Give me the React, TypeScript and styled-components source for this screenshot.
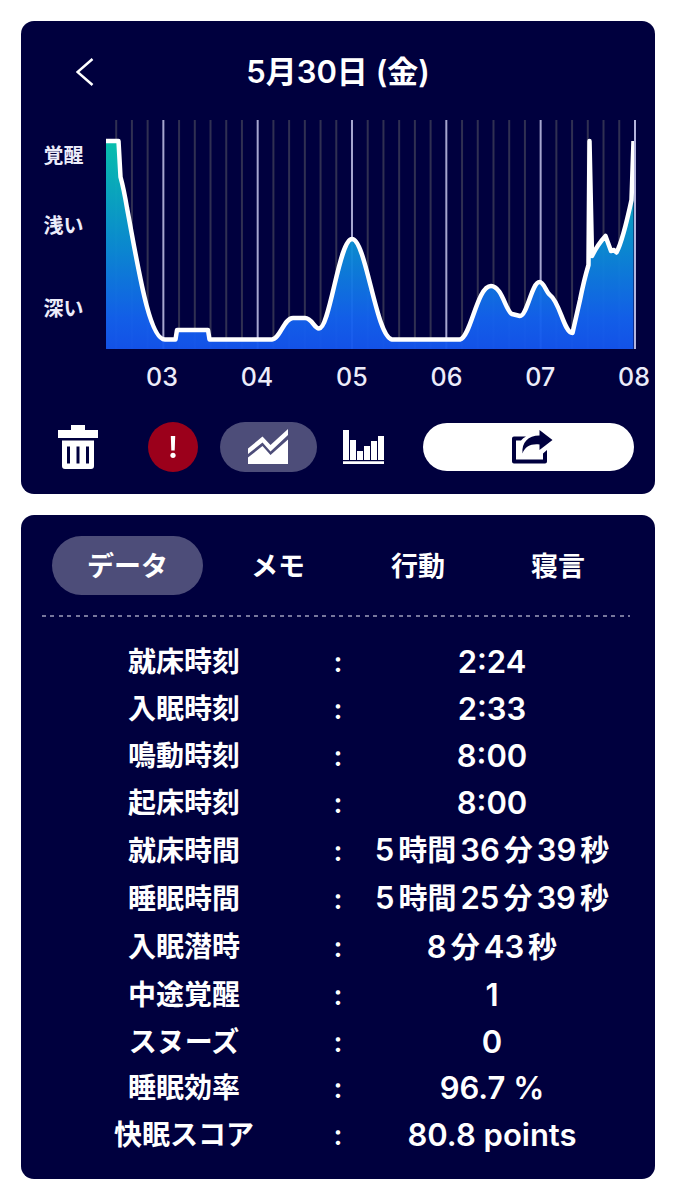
import React, { useState } from "react";
import styled, { createGlobalStyle } from "styled-components";

const navy = "#00003e";
const raised = "#4d4d79";
const soft = "#ececfa";

const GlobalStyle = createGlobalStyle`
  * { box-sizing: border-box; }
  body {
    margin: 0;
    background: #fff;
    color: #fff;
    font-family: Inter, "Noto Sans CJK JP", sans-serif;
    font-weight: 600;
  }
  button {
    font: inherit;
    color: inherit;
    border: 0;
    padding: 0;
    background: none;
    cursor: pointer;
  }
`;

const Page = styled.main`
  display: flex;
  flex-direction: column;
  gap: 21px;
  padding: 21px;
`;

const Card = styled.section`
  background: ${navy};
  border-radius: 13px;
`;

const Header = styled.header`
  display: grid;
  grid-template-columns: 64px 1fr 64px;
  align-items: center;
  padding: 31px 32px 28px;
`;

const BackButton = styled.button`
  display: flex;
  align-items: center;
  justify-content: center;
  height: 40px;
`;

const Title = styled.h1`
  margin: 0;
  font-size: 31px;
  line-height: 40px;
  font-weight: 600;
  text-align: center;
`;

const ChartArea = styled.div`
  display: grid;
  grid-template-columns: 85px 1fr;
  padding-right: 19px;
`;

const Levels = styled.div`
  padding-top: 22px;
  text-align: center;
`;

const Level = styled.div<{ $gap: number }>`
  margin-top: ${(p) => p.$gap}px;
  font-size: 20px;
  line-height: 28px;
  color: ${soft};
`;

const Plot = styled.svg`
  display: block;
  width: 100%;
  height: auto;
`;

const Hours = styled.div`
  display: flex;
  justify-content: space-between;
  margin: 12px 5px 0 125px;
  font-size: 25px;
  line-height: 32px;
  font-weight: 500;
  color: ${soft};
`;

const Toolbar = styled.div`
  display: flex;
  align-items: center;
  padding: 29px 21px 22px 32px;
`;

const ToolButton = styled.button<{ $gap?: number; $wide?: boolean; $fill?: string }>`
  display: flex;
  flex: none;
  align-items: center;
  justify-content: center;
  width: ${(p) => (p.$wide ? 97 : 50)}px;
  height: 50px;
  margin-left: ${(p) => p.$gap ?? 0}px;
  border-radius: 25px;
  background: ${(p) => p.$fill ?? "none"};
`;

const ShareButton = styled.button`
  display: flex;
  flex: 1;
  align-items: center;
  justify-content: center;
  height: 48px;
  margin-left: 34px;
  padding-left: 8px;
  border-radius: 24px;
  background: #fff;
`;

const Tabs = styled.div`
  display: flex;
  padding: 21px 27px 20px 31px;
`;

const Tab = styled.button<{ $active: boolean }>`
  flex: ${(p) => (p.$active ? 151 : 140)} 1 0;
  height: 59px;
  margin-right: ${(p) => (p.$active ? 5 : 0)}px;
  padding-bottom: 2px;
  border-radius: 30px;
  background: ${(p) => (p.$active ? raised : "none")};
  font-size: 27px;
`;

const Divider = styled.hr`
  height: 2px;
  margin: 0 25px 0 21px;
  border: 0;
  background: repeating-linear-gradient(
    90deg,
    #77779c 0 4px,
    transparent 4px 8px,
    #77779c 8px 12px,
    transparent 12px 17px
  );
`;

const TableWrap = styled.div`
  padding: 22px 21px 20px;
`;

const Table = styled.table`
  width: 100%;
  height: 520px;
  border-collapse: collapse;
  table-layout: fixed;
`;

const ColonColumn = styled.col`
  width: 24px;
`;

const Label = styled.th`
  padding: 0;
  font-size: 28px;
  line-height: 40px;
  font-weight: 600;
  text-align: center;
`;

const Colon = styled.td`
  padding: 0;
  font-size: 28px;
  line-height: 40px;
  text-align: center;
`;

const Value = styled.td`
  padding: 0;
  font-size: 31px;
  line-height: 40px;
  text-align: center;
  white-space: nowrap;
`;

const Duration = styled.span`
  display: inline-flex;
  align-items: baseline;
  gap: 4px;
`;

const Unit = styled.span`
  font-size: 29px;
`;

const curve =
  "M0 21H12.5L14.5 57C17 66 19 76 21 88C32 146 43 220 59 219.500H69.500L71 210H102L103.500 219.500H166C174 219 178 198 187 198H199C206 198 208 208.500 213 208.500C224 208.500 233 119 246 119C260 119 270 217 286 219.500H354C365 217 371 166 385 166C396 166 400 192 406 194L414 196C421 196 426 162 433.500 162C438 162 440 172 444 175C454 182 458 213 466.500 213L474 180Q478 160 482.500 145L483.500 21L486 136Q492 124 499.500 116L505 131L508 130L510.500 132.500C515 124 521 101 525.500 80L527.500 21";

const gridLines = Array.from({ length: 33 }, (_, i) => ({
  x: 10.2 + i * 15.72,
  hour: i % 6 === 3,
}));

function SleepChart() {
  return (
    <Plot viewBox="0 0 530 229" role="img" aria-label="睡眠グラフ">
      <defs>
        <linearGradient id="depth" x1="0" y1="21" x2="0" y2="229" gradientUnits="userSpaceOnUse">
          <stop offset="0" stopColor="#08c6b0" />
          <stop offset="0.5" stopColor="#0b8ed4" />
          <stop offset="0.85" stopColor="#1362ee" />
          <stop offset="1" stopColor="#1455ee" />
        </linearGradient>
        <clipPath id="plotClip">
          <rect width="528" height="229" />
        </clipPath>
      </defs>
      {gridLines.map((l) => (
        <line
          key={l.x}
          x1={l.x}
          x2={l.x}
          y1="0"
          y2="229"
          stroke={l.hour ? "#a6a6cf" : "#303052"}
          strokeWidth="2"
        />
      ))}
      <g clipPath="url(#plotClip)">
        <path d={`${curve}V229H0Z`} fill="url(#depth)" fillOpacity="0.96" />
        <path d={curve} fill="none" stroke="#fff" strokeWidth="4.5" strokeLinejoin="round" />
      </g>
      <line x1="529" x2="529" y1="0" y2="229" stroke="#b4b4dc" strokeWidth="2" />
    </Plot>
  );
}

const BackIcon = () => (
  <svg width="18" height="28" viewBox="0 0 18 28" aria-hidden="true">
    <path d="M16.500 1L1.500 14L16.500 27" fill="none" stroke="#fff" strokeWidth="2.500" />
  </svg>
);

const TrashIcon = () => (
  <svg width="40" height="44" viewBox="0 0 40 44" aria-hidden="true">
    <path
      fill="#fff"
      fillRule="evenodd"
      d="M13 0H27V5H40V13H0V5H13ZM4 15.500H36V41Q36 44 33 44H7Q4 44 4 41ZM9 21.500V38.500H12V21.500ZM18.500 21.500V38.500H21.500V21.500ZM28 21.500V38.500H31V21.500Z"
    />
  </svg>
);

const AlertIcon = () => (
  <svg width="6" height="22" viewBox="0 0 6 22" aria-hidden="true">
    <path d="M.8 0H5.200L4.700 14.500H1.300Z" fill="#fff" />
    <circle cx="3" cy="19.300" r="2.600" fill="#fff" />
  </svg>
);

const AreaIcon = () => (
  <svg width="41" height="37" viewBox="0 0 41 37" aria-hidden="true">
    <path d="M0 19.500L14.500 7.500L22.500 16L40 0V6L22.500 22.500L14.500 13.500L0 25Z" fill="#fff" />
    <path d="M0 28.500L14.500 17L22.500 26L40 10.500V35H0Z" fill="#fff" />
  </svg>
);

const BarsIcon = () => (
  <svg width="42" height="34" viewBox="0 0 42 34" aria-hidden="true">
    <path
      d="M0 0H6V30H0ZM7 10H13V30H7ZM14 21H20V30H14ZM21 16H27V30H21ZM28 11H34V30H28ZM35 6H41V30H35ZM0 31.300H41V34H0Z"
      fill="#fff"
    />
  </svg>
);

const ShareIcon = () => (
  <svg width="42" height="34" viewBox="0 0 42 34" aria-hidden="true">
    <path
      d="M14 6.500H2Q0 6.500 0 8.500V31.500Q0 33.500 2 33.500H33Q35 33.500 35 31.500V20L31 23.500V29.500H4V10.500H9Q11 8 14 6.500Z"
      fill={navy}
    />
    <path
      d="M27.500 0L40.500 10L27.500 20V14.500C19 13.500 13 16.500 10.500 23.500C9.500 12.500 16 5.500 27.500 5.500Z"
      fill={navy}
    />
  </svg>
);

const hours = ["03", "04", "05", "06", "07", "08"];
const tabs = ["データ", "メモ", "行動", "寝言"];
const levels = [
  { name: "覚醒", gap: 0 },
  { name: "浅い", gap: 42 },
  { name: "深い", gap: 55 },
];

type Row = { label: string; text?: string; parts?: [string, string][] };
const rows: Row[] = [
  { label: "就床時刻", text: "2:24" },
  { label: "入眠時刻", text: "2:33" },
  { label: "鳴動時刻", text: "8:00" },
  { label: "起床時刻", text: "8:00" },
  { label: "就床時間", parts: [["5", "時間"], ["36", "分"], ["39", "秒"]] },
  { label: "睡眠時間", parts: [["5", "時間"], ["25", "分"], ["39", "秒"]] },
  { label: "入眠潜時", parts: [["8", "分"], ["43", "秒"]] },
  { label: "中途覚醒", text: "1" },
  { label: "スヌーズ", text: "0" },
  { label: "睡眠効率", text: "96.7 %" },
  { label: "快眠スコア", text: "80.8 points" },
];

export default function App() {
  const [tab, setTab] = useState(tabs[0]);
  return (
    <Page>
      <GlobalStyle />
      <Card>
        <Header>
          <BackButton aria-label="戻る">
            <BackIcon />
          </BackButton>
          <Title>5月30日 (金)</Title>
        </Header>
        <ChartArea>
          <Levels>
            {levels.map((l) => (
              <Level key={l.name} $gap={l.gap}>
                {l.name}
              </Level>
            ))}
          </Levels>
          <SleepChart />
        </ChartArea>
        <Hours>
          {hours.map((h) => (
            <span key={h}>{h}</span>
          ))}
        </Hours>
        <Toolbar>
          <ToolButton aria-label="削除">
            <TrashIcon />
          </ToolButton>
          <ToolButton aria-label="警告" $gap={45} $fill="#9b001b">
            <AlertIcon />
          </ToolButton>
          <ToolButton aria-label="折れ線グラフ" $gap={22} $wide $fill={raised}>
            <AreaIcon />
          </ToolButton>
          <ToolButton aria-label="棒グラフ" $gap={22}>
            <BarsIcon />
          </ToolButton>
          <ShareButton aria-label="共有">
            <ShareIcon />
          </ShareButton>
        </Toolbar>
      </Card>
      <Card>
        <Tabs role="tablist">
          {tabs.map((t) => (
            <Tab key={t} role="tab" aria-selected={t === tab} $active={t === tab} onClick={() => setTab(t)}>
              {t}
            </Tab>
          ))}
        </Tabs>
        <Divider />
        <TableWrap>
          <Table>
            <colgroup>
              <col />
              <ColonColumn />
              <col />
            </colgroup>
            <tbody>
              {rows.map((r) => (
                <tr key={r.label}>
                  <Label scope="row">{r.label}</Label>
                  <Colon>:</Colon>
                  <Value>
                    {r.text}
                    {r.parts && (
                      <Duration>
                        {r.parts.map(([n, u]) => (
                          <React.Fragment key={u}>
                            <span>{n}</span>
                            <Unit>{u}</Unit>
                          </React.Fragment>
                        ))}
                      </Duration>
                    )}
                  </Value>
                </tr>
              ))}
            </tbody>
          </Table>
        </TableWrap>
      </Card>
    </Page>
  );
}
